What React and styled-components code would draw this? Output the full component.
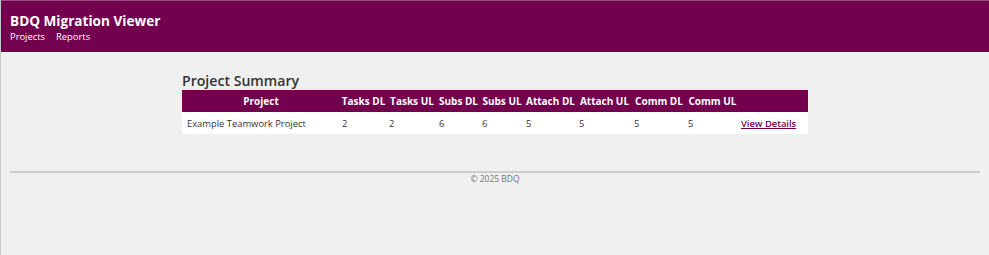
import React from "react";
import styled, { createGlobalStyle } from "styled-components";

const GlobalStyle = createGlobalStyle`
    body {
        margin: 0;
        background: #f0f0f0;
        font-family: "Open Sans", "Liberation Sans", sans-serif;
        color: #333;
    }
`;

const columns = [
    { label: "Project", width: 158 },
    { label: "Tasks DL", width: 47 },
    { label: "Tasks UL", width: 50 },
    { label: "Subs DL", width: 43 },
    { label: "Subs UL", width: 44 },
    { label: "Attach DL", width: 53 },
    { label: "Attach UL", width: 55 },
    { label: "Comm DL", width: 54 },
    { label: "Comm UL", width: 53 },
    { label: "", width: 69 },
];

const projects = [
    { name: "Example Teamwork Project", counts: [2, 2, 6, 6, 5, 5, 5, 5] },
];

function App() {
    return (
        <Page>
            <GlobalStyle />
            <Header>
                <Title>BDQ Migration Viewer</Title>
                <Nav>
                    <NavLink href="#">Projects</NavLink>
                    <NavLink href="#">Reports</NavLink>
                </Nav>
            </Header>

            <Main>
                <Heading>Project Summary</Heading>
                <Table>
                    <thead>
                        <tr>
                            {columns.map((c, i) => (
                                <Th key={i} $width={c.width}>{c.label}</Th>
                            ))}
                        </tr>
                    </thead>
                    <tbody>
                        {projects.map((p) => (
                            <tr key={p.name}>
                                <Td $first>{p.name}</Td>
                                {p.counts.map((n, i) => (
                                    <Td key={i}>{n}</Td>
                                ))}
                                <Td>
                                    <DetailsLink href="#">View Details</DetailsLink>
                                </Td>
                            </tr>
                        ))}
                    </tbody>
                </Table>
            </Main>

            <Footer>
                <Rule />
                <Copy>© 2025 BDQ</Copy>
            </Footer>
        </Page>
    );
}

const Page = styled.div`
    min-height: 255px;
    border-left: 1px solid #c8c8c8;
    box-sizing: border-box;
`;

const Header = styled.header`
    background: #72004f;
    border-top: 1px solid #9a4a80;
    padding: 11px 9px 9px;
    color: #fff;
`;

const Title = styled.div`
    font-size: 13.6px;
    font-weight: 700;
    line-height: 18px;
`;

const Nav = styled.nav`
    display: flex;
    gap: 11px;
`;

const NavLink = styled.a`
    color: #fff;
    text-decoration: none;
    font-size: 9.4px;
    line-height: 13px;
`;

const Main = styled.main`
    width: 626px;
    margin: 19px auto 0;
`;

const Heading = styled.h2`
    margin: 0;
    font-size: 14.1px;
    font-weight: 600;
    line-height: 19px;
    color: #333;
`;

const Table = styled.table`
    width: 626px;
    table-layout: fixed;
    border-collapse: collapse;
    background: #fff;
    font-size: 9.4px;
`;

const Th = styled.th`
    width: ${(p) => p.$width}px;
    height: 22px;
    padding: 0 1px;
    background: #72004f;
    color: #fff;
    font-size: 10px;
    font-weight: 700;
    text-align: center;
    white-space: nowrap;
    box-sizing: border-box;
`;

const Td = styled.td`
    height: 22px;
    padding: 0 2px 0 ${(p) => (p.$first ? 5 : 2)}px;
    color: #333;
    text-align: left;
    white-space: nowrap;
`;

const DetailsLink = styled.a`
    color: #72004f;
    font-weight: 600;
    text-decoration: underline;
`;

const Footer = styled.footer`
    margin: 37px 9px 0;
    text-align: center;
`;

const Rule = styled.div`
    height: 2px;
    background: #cccccc;
`;

const Copy = styled.div`
    font-size: 8.5px;
    line-height: 12px;
    color: #777;
`;

export default App;
